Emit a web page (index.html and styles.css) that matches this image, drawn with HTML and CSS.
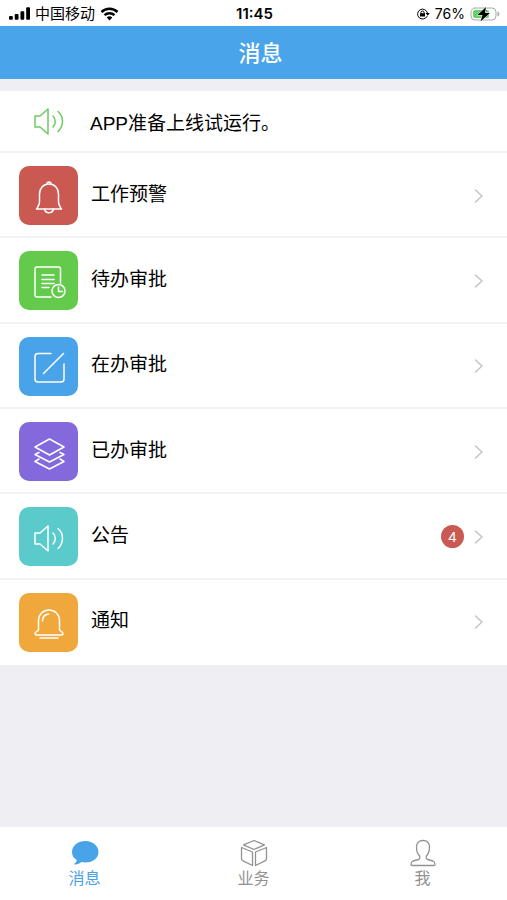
FILE: index.html
```html
<!DOCTYPE html>
<html lang="zh-CN">
  <head>
    <meta charset="utf-8" />
    <meta name="viewport" content="width=device-width, initial-scale=1" />
    <title>消息</title>
    <link rel="stylesheet" href="styles.css">
  </head>
  <body>
    <svg class="sprite" aria-hidden="true">
      <symbol id="icon-speaker" viewBox="0 0 32 32">
        <path d="M2 11h5l8-7v25l-8-7H2z" />
        <path d="M20 11c3 3 3 8 0 11M25 6.500c6 5 6 14 0 20" />
      </symbol>
      <symbol id="icon-arrow" viewBox="0 0 10 14">
        <path d="M1.500 1l6.500 6-6.500 6" />
      </symbol>
    </svg>

    <div class="app">
      <div class="status-bar">
        <div class="status-left">
          <svg class="signal" viewBox="0 0 22 14">
            <rect x="0" y="9" width="4" height="4" rx="1" />
            <rect x="6" y="7" width="4" height="6" rx="1" />
            <rect x="12" y="4" width="4" height="9" rx="1" />
            <rect x="18" y="0" width="4" height="13" rx="1" />
          </svg>
          <span>中国移动</span>
          <svg class="wifi" viewBox="0 0 18 14">
            <path d="M1 5a11.500 11.500 0 0 1 16 0M4 8.200a7.200 7.200 0 0 1 10 0" />
            <path class="wifi-dot" d="M9 13.500L6.200 10.600a4 4 0 0 1 5.600 0z" />
          </svg>
        </div>
        <span class="time">11:45</span>
        <div class="status-right">
          <svg class="lock" viewBox="0 0 14 12">
            <path d="M11 8.500A5 5 0 1 1 11.500 5" />
            <path d="M4.900 5.500V4.600a1.600 1.600 0 0 1 3.200 0v.9" />
            <path class="fill" d="M4 5.300h5v3.200H4zM9.600 5h4.200l-2.100 2.800z" />
          </svg>
          <span>76%</span>
          <svg class="battery" viewBox="0 0 30 16">
            <rect class="battery-case" x="1" y="2" width="25" height="12" rx="4" />
            <rect class="battery-level" x="3" y="4" width="16" height="8" rx="2" />
            <path class="battery-cap" d="M27.500 5.500c2.500 1 2.500 4 0 5z" />
            <path class="battery-bolt" d="M16 1L7.500 9h5L10.500 15.500 20 7h-5z" />
          </svg>
        </div>
      </div>

      <header class="header">
        <h1>消息</h1>
      </header>

      <main>
        <div class="notice">
          <svg class="notice-icon"><use href="#icon-speaker" /></svg>
          <p>APP准备上线试运行。</p>
        </div>

        <nav class="list">
          <a class="item" href="#warning">
            <span class="item-icon red">
              <svg viewBox="0 0 32 32">
                <path d="M16 3c-6 0-9.500 4.500-9.500 10V21c0 3-1.500 4.500-3 7h25c-1.500-2.500-3-4-3-7v-8c0-5.500-3.500-10-9.500-10z" />
                <path d="M14 3a2 2 0 0 1 4 0M11.500 28c1 5 8 5 9 0" />
              </svg>
            </span>
            <span class="item-title">工作预警</span>
            <svg class="arrow"><use href="#icon-arrow" /></svg>
          </a>
          <a class="item" href="#todo">
            <span class="item-icon green">
              <svg viewBox="0 0 32 32">
                <path d="M27.500 17V3c0-1.500-.5-2-2-2H4C2.500 1 2 1.500 2 3v26c0 1.500.5 2 2 2h14" />
                <path d="M9 9h12M9 13.500h12M9 17.500h12M9 21.500h7" />
                <circle cx="25.500" cy="25" r="6.500" />
                <path d="M25.500 21v4.500h4" />
              </svg>
            </span>
            <span class="item-title">待办审批</span>
            <svg class="arrow"><use href="#icon-arrow" /></svg>
          </a>
          <a class="item" href="#doing">
            <span class="item-icon blue">
              <svg viewBox="0 0 32 32">
                <path d="M18 2.500H5a3 3 0 0 0-3 3V28a3 3 0 0 0 3 3h23a3 3 0 0 0 3-3V13" />
                <path d="M30.500 2.500L10.500 22.500" />
              </svg>
            </span>
            <span class="item-title">在办审批</span>
            <svg class="arrow"><use href="#icon-arrow" /></svg>
          </a>
          <a class="item" href="#done">
            <span class="item-icon purple">
              <svg viewBox="0 0 32 32">
                <path d="M16.500 2L2 10l14.500 8L31 10z" />
                <path d="M6 15.500l-4 2L16.500 25 31 17.500l-4-2M6 22l-4 2.500L16.500 32 31 24.500 27 22" />
              </svg>
            </span>
            <span class="item-title">已办审批</span>
            <svg class="arrow"><use href="#icon-arrow" /></svg>
          </a>
          <a class="item" href="#announcement">
            <span class="item-icon teal">
              <svg><use href="#icon-speaker" /></svg>
            </span>
            <span class="item-title">公告</span>
            <span class="badge">4</span>
            <svg class="arrow"><use href="#icon-arrow" /></svg>
          </a>
          <a class="item" href="#notification">
            <span class="item-icon orange">
              <svg viewBox="0 0 32 32">
                <path d="M5.500 23V13.500a10.500 10.500 0 0 1 21 0V23c0 1 3.500 1.500 3.500 3.500 0 1-.7 1.500-2 1.500H4c-1.300 0-2-.5-2-1.500C2 24.500 5.500 24 5.500 23z" />
                <path d="M9.500 14c0-4 2-6.500 6-7M7 31h18" />
              </svg>
            </span>
            <span class="item-title">通知</span>
            <svg class="arrow"><use href="#icon-arrow" /></svg>
          </a>
        </nav>
      </main>

      <nav class="tab-bar">
        <a class="tab active" href="#message">
          <svg viewBox="0 0 28 28">
            <path class="bubble" d="M14.500 2C7 2 1 6.500 1 13c0 3.500 1.800 6.200 4.700 8-.2 2-1.200 3.300-3.200 4.300 3 .4 6-.3 8-2.300 1.200.3 2.500.5 4 .5C22 23.500 27.500 19 27.500 13S22 2 14.500 2z" />
          </svg>
          <span>消息</span>
        </a>
        <a class="tab" href="#business">
          <svg viewBox="0 0 28 28">
            <path d="M14 1.500L3.500 5.800 14 10.500l10.500-4.700zM1.500 8.500l11 4.500v13.500l-9.500-4.700c-1-.5-1.500-1.300-1.500-2.300zM26.500 8.500l-11 4.500v13.500l9.500-4.700c1-.5 1.500-1.300 1.500-2.300z" />
          </svg>
          <span>业务</span>
        </a>
        <a class="tab" href="#me">
          <svg viewBox="0 0 28 28">
            <path d="M14 1.500c-4 0-6.500 2.500-6.500 6.500 0 4.500 1 7 3.200 9v2c0 .8-.5 1.200-1.200 1.500l-5.500 1.500c-1.800.6-2 2-2 3.500 0 .7.300 1 1 1h22c.7 0 1-.3 1-1 0-1.500-.2-2.900-2-3.500l-5.500-1.500c-.7-.3-1.200-.7-1.200-1.500v-2c2.200-2 3.200-4.500 3.200-9 0-4-2.300-6.500-6.300-6.500z" />
          </svg>
          <span>我</span>
        </a>
      </nav>
    </div>
  </body>
</html>
```

FILE: styles.css
```css
* {
  box-sizing: border-box;
}
body {
  margin: 0;
  background: #eeeef3;
  color: #000;
  font-family: "Liberation Sans", "Noto Sans CJK SC", sans-serif;
}
a {
  color: inherit;
  text-decoration: none;
}
svg {
  display: block;
  flex-shrink: 0;
  fill: none;
  stroke: currentColor;
  stroke-linejoin: round;
  stroke-linecap: round;
}
.sprite {
  display: none;
}
.app {
  display: flex;
  flex-direction: column;
  min-height: 100vh;
}
main {
  flex: 1;
}

/* status bar */
.status-bar {
  display: grid;
  grid-template-columns: 1fr auto 1fr;
  align-items: center;
  height: 26px;
  padding: 1px 7px 0 9px;
  background: #fff;
  font-family: Inter, "Noto Sans CJK SC", sans-serif;
  font-size: 15px;
  line-height: 25px;
}
.status-left,
.status-right {
  display: flex;
  align-items: center;
  gap: 5px;
}
.status-right {
  justify-content: flex-end;
  font-size: 14px;
}
.time {
  font-size: 15px;
  font-weight: 600;
}
.signal {
  width: 21px;
  height: 14px;
  fill: #000;
  stroke: none;
}
.wifi {
  width: 19px;
  height: 14px;
  stroke-width: 2.5;
  stroke-linecap: butt;
}
.wifi-dot,
.lock .fill {
  fill: #000;
  stroke: none;
}
.lock {
  width: 14px;
  height: 12px;
}
.battery {
  width: 30px;
  height: 16px;
}
.battery-case {
  stroke: #aaa;
}
.battery-level {
  fill: #65d068;
  stroke: none;
}
.battery-cap {
  fill: #aaa;
  stroke: none;
}
.battery-bolt {
  fill: #000;
  stroke: #fff;
  paint-order: stroke;
}

.header {
  display: flex;
  align-items: center;
  justify-content: center;
  height: 53px;
  padding: 2px 0 0 14px;
  background: #4aa4ea;
  color: #fff;
}
.header h1 {
  margin: 0;
  font-size: 22px;
  font-weight: 500;
  line-height: 32px;
}

.notice {
  display: flex;
  align-items: center;
  gap: 25px;
  height: 62px;
  margin-top: 12px;
  padding: 0 33px;
  background: #fff;
  border-bottom: 2px solid #f2f2f4;
  font-size: 19px;
}
.notice p {
  margin: 0;
}
.notice-icon {
  width: 32px;
  height: 32px;
  color: #6ccb62;
  stroke-width: 1.5;
}

/* message list */
.list {
  display: grid;
  grid-auto-rows: 1fr;
  min-height: 512px;
  background: #fff;
}
.item {
  display: flex;
  align-items: center;
  padding: 2px 23px 0 19px;
  border-bottom: 2px solid #f2f2f4;
}
.item:last-child {
  border-bottom-color: transparent;
}
.item-icon {
  display: flex;
  align-items: center;
  justify-content: center;
  width: 59px;
  height: 59px;
  padding-top: 2px;
  border-radius: 10px;
  color: #fff;
}
.item-icon svg {
  width: 32px;
  height: 32px;
  overflow: visible;
  stroke-width: 1.5;
}
.red {
  background: #ca5952;
}
.green {
  background: #63ca4c;
}
.blue {
  background: #48a3e8;
}
.purple {
  background: #8369dc;
}
.teal {
  background: #5bcaca;
}
.orange {
  background: #f0a73b;
}
.item-title {
  flex: 1;
  padding: 0 0 2px 13px;
  font-size: 19px;
  line-height: 28px;
}
.badge {
  width: 23px;
  height: 23px;
  margin-right: 10px;
  border-radius: 50%;
  background: #ca5952;
  color: #fff;
  font-size: 15px;
  line-height: 23px;
  text-align: center;
}
.arrow {
  width: 10px;
  height: 14px;
  color: #c4c4c8;
  stroke-width: 1.5;
}

.tab-bar {
  display: grid;
  grid-template-columns: repeat(3, 1fr);
  height: 73px;
  background: #fff;
}
.tab {
  display: flex;
  flex-direction: column;
  align-items: center;
  padding-top: 12px;
  color: #929292;
  font-size: 16px;
  line-height: 24px;
}
.tab svg {
  width: 28px;
  height: 28px;
  stroke-width: 1.3;
}
.tab.active {
  color: #48a3e8;
}
.bubble {
  fill: currentColor;
  stroke: none;
}
```
